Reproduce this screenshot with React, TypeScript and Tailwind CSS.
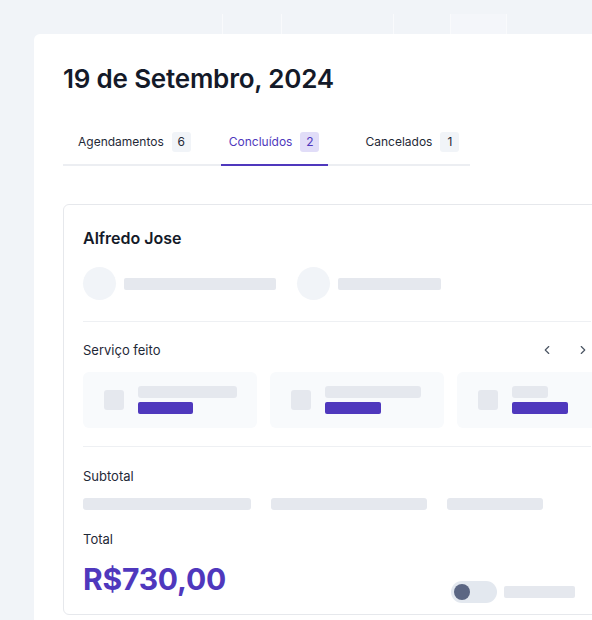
import { ChevronLeft, ChevronRight } from "lucide-react";

const services = [
  { name: 99, price: 55 },
  { name: 96, price: 56 },
  { name: 36, price: 56 },
];

function Tab({ label, count, active, className }: { label: string; count: number; active?: boolean; className?: string }) {
  return (
    <div
      className={`-mb-[2px] flex items-center gap-2 border-b-2 pl-2 pr-[9px] pt-[10px] pb-[12px] ${
        active ? "border-[#4f38bd] text-[#4f38bd]" : "border-transparent text-[#1f2937]"
      } ${className ?? ""}`}
    >
      <span className="text-[12px] leading-5">{label}</span>
      <span
        className={`flex h-5 w-[19px] items-center justify-center rounded-[3px] text-[12px] ${
          active ? "bg-[#e1ddf8] text-[#4f38bd]" : "bg-[#f1f4f8] text-[#1f2937]"
        }`}
      >
        {count}
      </span>
    </div>
  );
}

export default function App() {
  return (
    <div
      className="relative h-[620px] w-[592px] overflow-hidden bg-[#f1f4f8]"
      style={{ fontFamily: "Inter, 'Noto Sans', sans-serif" }}
    >
      {/* faint table columns behind */}
      <div className="flex h-[34px] pl-[222px] pt-[14px]">
        <div className="w-[59px] border-l border-[#f9fafc]" />
        <div className="w-[112px] border-l border-[#f9fafc]" />
        <div className="w-[57px] border-l border-[#f9fafc]" />
        <div className="w-[56px] border-l border-[#f9fafc] bg-[#f4f6fa]" />
        <div className="w-[60px] border-l border-[#f9fafc]" />
      </div>

      <div className="ml-[34px] h-[586px] overflow-hidden rounded-tl-md bg-white pl-[29px] pt-[29px]">
        <h1 className="text-[26px] font-semibold leading-8 tracking-[-0.2px] text-[#141a29]">19 de Setembro, 2024</h1>

        <div className="mt-[27px] flex w-[407px] border-b-2 border-[#eceef2]">
          <Tab label="Agendamentos" count={6} className="ml-[7px]" />
          <Tab label="Concluídos" count={2} active className="ml-[21px]" />
          <Tab label="Cancelados" count={1} className="ml-[29px]" />
        </div>

        <div className="mt-[38px] w-[549px] rounded-md border border-[#e6e8ec] pl-[19px] pr-5 pt-[21px] pb-[11px]">
          <h2 className="text-[16px] font-semibold leading-6 text-[#141a29]">Alfredo Jose</h2>

          <div className="mt-[17px] flex items-center">
            <div className="h-[33px] w-[33px] rounded-full bg-[#f1f4f8]" />
            <div className="ml-2 h-3 w-[152px] rounded-[2px] bg-[#e5e8ee]" />
            <div className="ml-[21px] h-[33px] w-[33px] rounded-full bg-[#f1f4f8]" />
            <div className="ml-2 h-3 w-[103px] rounded-[2px] bg-[#e5e8ee]" />
          </div>

          <div className="mt-[21px] h-px bg-[#eef0f3]" />

          <div className="mt-[18px] flex items-center justify-between">
            <span className="text-[13px] leading-5 text-[#1f2937]">Serviço feito</span>
            <div className="mr-[1px] flex items-center gap-[22px] text-[#4b5563]">
              <ChevronLeft size={14} strokeWidth={2} />
              <ChevronRight size={14} strokeWidth={2} />
            </div>
          </div>

          <div className="mt-3 flex gap-[13px]">
            {services.map((s, i) => (
              <div key={i} className="flex h-[56px] w-[174px] shrink-0 items-center rounded-md bg-[#f8fafc] pl-[21px]">
                <div className="h-5 w-5 rounded-[3px] bg-[#e5e8ee]" />
                <div className="ml-[14px] flex flex-col gap-1">
                  <div className="h-3 rounded-[3px] bg-[#e5e8ee]" style={{ width: s.name }} />
                  <div className="h-3 rounded-[2px] bg-[#4f38bd]" style={{ width: s.price }} />
                </div>
              </div>
            ))}
          </div>

          <div className="mt-[18px] h-px bg-[#eef0f3]" />

          <div className="mt-[19px] text-[13px] leading-5 text-[#1f2937]">Subtotal</div>
          <div className="mt-3 flex gap-5">
            <div className="h-3 w-[168px] rounded-[3px] bg-[#e5e8ee]" />
            <div className="h-3 w-[156px] rounded-[3px] bg-[#e5e8ee]" />
            <div className="h-3 w-[96px] rounded-[3px] bg-[#e5e8ee]" />
          </div>

          <div className="mt-[19px] text-[13px] leading-5 text-[#1f2937]">Total</div>
          <div className="mt-3 flex items-start">
            <span className="text-[30px] font-bold leading-9 tracking-[-0.2px] text-[#4f38bd]">R$730,00</span>
            <div className="ml-auto mr-[16px] mt-[20px] flex items-center gap-[7px]">
              <div className="flex h-[22px] w-[46px] items-center rounded-full bg-[#e3e8ef] pl-[3px]">
                <div className="h-4 w-4 rounded-full bg-[#5b6683]" />
              </div>
              <div className="h-3 w-[71px] rounded-[2px] bg-[#e5e8ee]" />
            </div>
          </div>
        </div>
      </div>
    </div>
  );
}
